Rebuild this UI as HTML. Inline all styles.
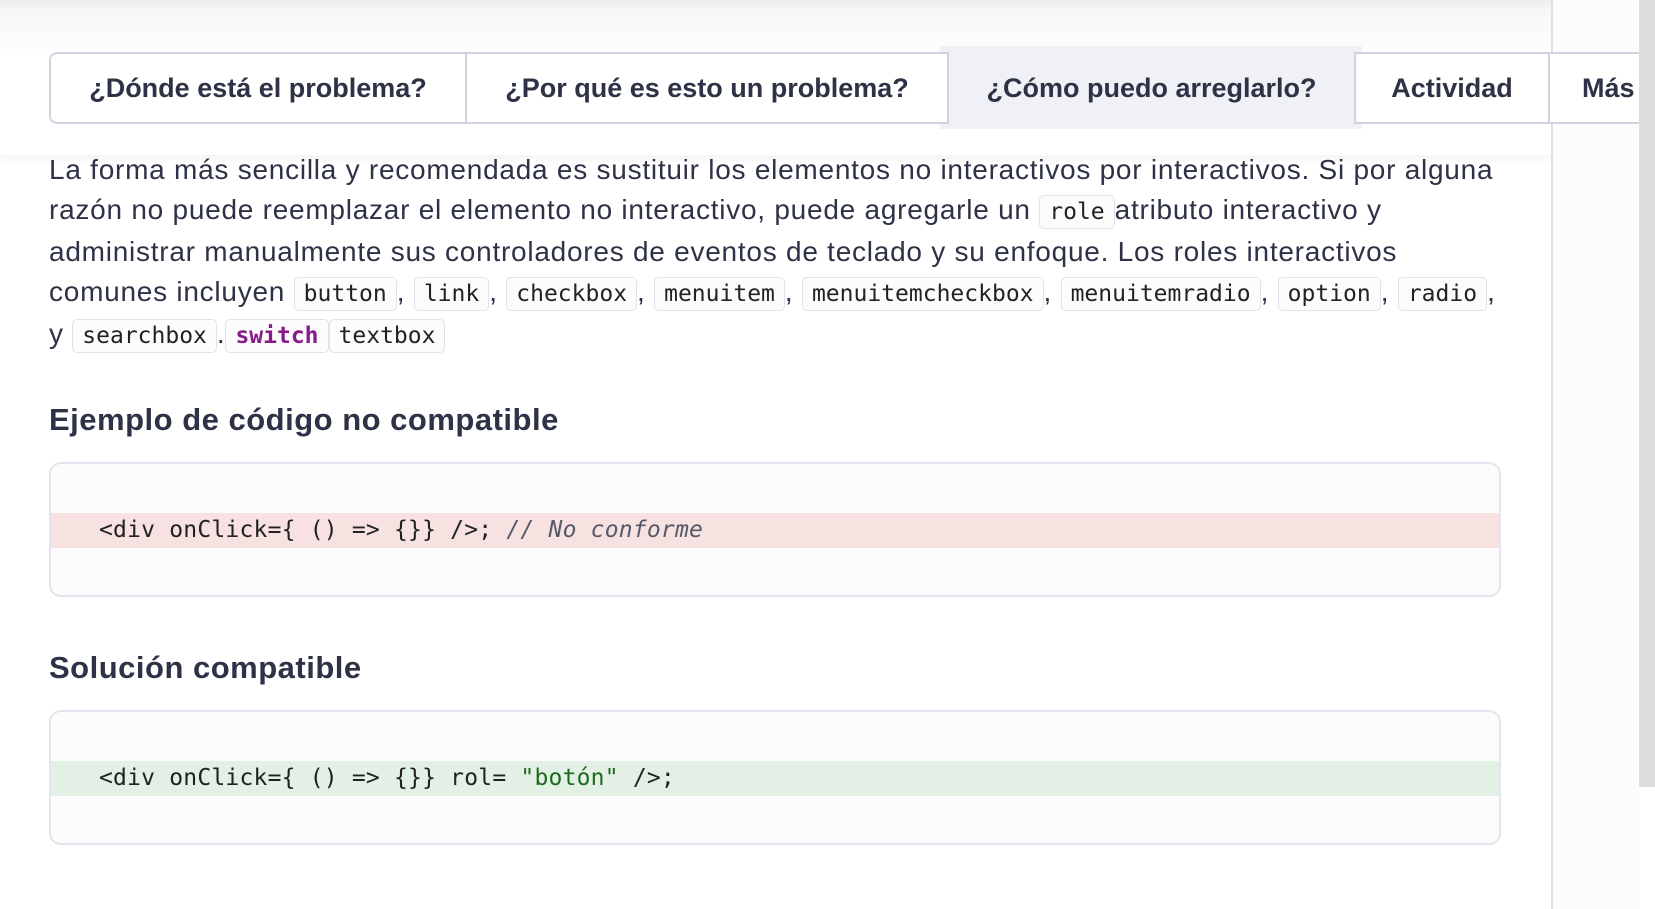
<!DOCTYPE html>
<html><head><meta charset="utf-8"><style>
*{margin:0;padding:0;box-sizing:border-box}
body{width:1655px;height:909px;overflow:hidden;background:#fff;font-family:"Liberation Sans",Arial,sans-serif;color:#2b2f3e;position:relative}
.right{position:absolute;left:1551px;top:0;width:88px;height:909px;background:#fcfcfd;border-left:2px solid #dde0ea}
.sb{position:absolute;left:1639px;top:0;width:16px;height:787px;background:#dcdcdc}
.sb2{position:absolute;left:1639px;top:787px;width:16px;height:122px;background:#fff}
.hdr{position:absolute;left:0;top:0;width:1551px;height:155px;background:linear-gradient(#ececee 0px,#f7f7f8 10px,#fff 60px);box-shadow:0 4px 8px rgba(0,0,0,.05)}
.tabs{position:absolute;left:49px;top:52px;width:1590px;height:72px;border:2px solid #cfd3e1;border-right:none;border-radius:8px 0 0 8px;background:#fff}
.act{position:absolute;left:940px;top:46px;width:422px;height:83px;background:#f0f1f6}
.tab{position:absolute;top:52px;height:72px;line-height:72px;font-size:27px;font-weight:bold;color:#2e3246;text-align:center;border-left:2px solid #cfd3e1;white-space:nowrap}
.p{position:absolute;left:49px;top:150px;font-size:28px;letter-spacing:0.75px;line-height:40px;color:#2e3246;white-space:nowrap}
code{font-family:"DejaVu Sans Mono","Liberation Mono",monospace;font-size:23px;letter-spacing:0;background:#fcfcfd;border:1.5px solid #e1e3ea;border-radius:5px;padding:3px 9px;color:#222}
code.sw{color:#8a1a8a;font-weight:bold}
h2{position:absolute;left:49px;font-size:31px;letter-spacing:0.5px;font-weight:bold;color:#2e3246}
.box{position:absolute;left:49px;width:1452px;background:#fcfcfd;border:2px solid #e3e5ee;border-radius:12px;overflow:hidden}
.hl{position:absolute;left:0;right:0;height:35px;line-height:35px;padding-left:48px;font-family:"DejaVu Sans Mono","Liberation Mono",monospace;font-size:23px;letter-spacing:0.2px;color:#222;white-space:pre}
.cm{font-style:italic;color:#555a6a}
.st{color:#1e6b1e}
</style></head><body>
<div class="hdr"></div>
<div class="right"></div>
<div class="sb"></div><div class="sb2"></div>
<div class="act"></div>
<div class="tabs"></div>
<div class="tab" style="left:51px;width:414px;border-left:none">¿Dónde está el problema?</div>
<div class="tab" style="left:465px;width:482px">¿Por qué es esto un problema?</div>
<div class="tab" style="left:947px;width:407px;background:#f0f1f6">¿Cómo puedo arreglarlo?</div>
<div class="tab" style="left:1354px;width:194px">Actividad</div>
<div class="tab" style="left:1548px;width:91px;text-align:left;padding-left:32px;overflow:hidden">Más</div>
<div class="p">La forma más sencilla y recomendada es sustituir los elementos no interactivos por interactivos. Si por alguna<br>razón no puede reemplazar el elemento no interactivo, puede agregarle un <code>role</code>atributo interactivo y<br>administrar manualmente sus controladores de eventos de teclado y su enfoque. Los roles interactivos<br>comunes incluyen <code>button</code>, <code>link</code>, <code>checkbox</code>, <code>menuitem</code>, <code>menuitemcheckbox</code>, <code>menuitemradio</code>, <code>option</code>, <code>radio</code>,<br>y <code>searchbox</code>.<code class="sw">switch</code><code>textbox</code></div>
<h2 style="top:402px">Ejemplo de código no compatible</h2>
<div class="box" style="top:462px;height:135px"><div class="hl" style="top:49px;background:#f7e1e1">&lt;div onClick={ () =&gt; {}} /&gt;; <span class="cm">// No conforme</span></div></div>
<h2 style="top:650px">Solución compatible</h2>
<div class="box" style="top:710px;height:135px"><div class="hl" style="top:49px;background:#e3f0e6">&lt;div onClick={ () =&gt; {}} rol= <span class="st">"botón"</span> /&gt;;</div></div>
</body></html>
